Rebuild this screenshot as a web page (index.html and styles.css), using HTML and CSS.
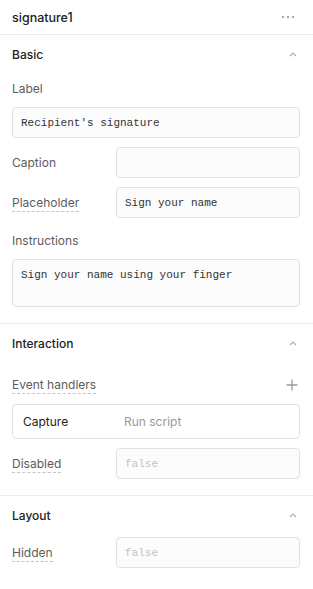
FILE: index.html
```html
<!DOCTYPE html>
<html lang="en">
<head>
    <meta charset="UTF-8">
    <meta name="viewport" content="width=device-width, initial-scale=1.0">
    <title>signature1 - Inspector</title>
    <link rel="stylesheet" href="styles.css">
</head>
<body>
    <div class="panel">
        <div class="panel-header">
            <span class="panel-title">signature1</span>
            <svg class="more" width="14" height="4" viewBox="0 0 14 4">
                <circle cx="2" cy="2" r="1.2"></circle>
                <circle cx="7" cy="2" r="1.2"></circle>
                <circle cx="12" cy="2" r="1.2"></circle>
            </svg>
        </div>

        <div class="section">
            <div class="section-head">
                <span>Basic</span>
                <svg class="chevron" width="8" height="5" viewBox="0 0 8 5"><path d="M1 4 L4 1 L7 4"></path></svg>
            </div>
            <div class="stack-label">Label</div>
            <div class="input mono">Recipient's signature</div>
            <div class="row">
                <span class="row-label">Caption</span>
                <div class="input row-input"></div>
            </div>
            <div class="row">
                <span class="row-label"><span class="dotted">Placeholder</span></span>
                <div class="input row-input mono">Sign your name</div>
            </div>
            <div class="stack-label spaced">Instructions</div>
            <div class="input textarea mono">Sign your name using your finger</div>
        </div>

        <div class="section">
            <div class="section-head">
                <span>Interaction</span>
                <svg class="chevron" width="8" height="5" viewBox="0 0 8 5"><path d="M1 4 L4 1 L7 4"></path></svg>
            </div>
            <div class="handlers-head">
                <span class="dotted">Event handlers</span>
                <svg class="plus" width="12" height="12" viewBox="0 0 12 12"><path d="M6 0.5 V11.5 M0.5 6 H11.5"></path></svg>
            </div>
            <div class="handler">
                <span class="handler-event">Capture</span>
                <span class="handler-action">Run script</span>
            </div>
            <div class="row">
                <span class="row-label"><span class="dotted">Disabled</span></span>
                <div class="input row-input mono muted">false</div>
            </div>
        </div>

        <div class="section last">
            <div class="section-head">
                <span>Layout</span>
                <svg class="chevron" width="8" height="5" viewBox="0 0 8 5"><path d="M1 4 L4 1 L7 4"></path></svg>
            </div>
            <div class="row flush">
                <span class="row-label"><span class="dotted">Hidden</span></span>
                <div class="input row-input mono muted">false</div>
            </div>
        </div>
    </div>
</body>
</html>
```

FILE: styles.css
```css
:root {
    --text: #222;
    --label: #5c5c5c;
    --muted: #9a9a9a;
    --line: #ececec;
    --field-border: #e2e2e2;
    --field-bg: #fcfcfc;
}

body {
    font-family: Inter, "Noto Sans", sans-serif;
    font-size: 12px;
    margin: 0;
    background-color: #fff;
    color: var(--text);
}

.panel {
    width: 313px;
}

.panel-header {
    height: 34px;
    display: flex;
    align-items: center;
    justify-content: space-between;
    padding: 0 18px 0 12px;
    border-bottom: 1px solid var(--line);
}

.panel-title {
    font-size: 12.5px;
    font-weight: 500;
}

.more circle {
    fill: #a8a8a8;
}

.section {
    padding: 0 13px 16px 12px;
    border-bottom: 1px solid var(--line);
}

.section.last {
    border-bottom: none;
}

.section-head {
    height: 38px;
    display: flex;
    align-items: center;
    justify-content: space-between;
    font-weight: 500;
    padding-right: 3px;
}

.chevron path {
    fill: none;
    stroke: #b0b0b0;
    stroke-width: 1.2;
}

.stack-label {
    color: var(--label);
    line-height: 20px;
    padding: 6px 0 8px;
}

.stack-label.spaced {
    padding: 13px 0 8px;
}

.input {
    box-sizing: border-box;
    height: 31px;
    border: 1px solid var(--field-border);
    border-radius: 4px;
    background-color: var(--field-bg);
    padding: 0 8px;
    display: flex;
    align-items: center;
    color: #333;
}

.mono {
    font-family: "Liberation Mono", "DejaVu Sans Mono", monospace;
    font-size: 11px;
}

.muted {
    color: #c2c2c2;
}

.textarea {
    height: 48px;
    align-items: flex-start;
    padding-top: 9px;
}

.row {
    display: flex;
    align-items: center;
    margin-top: 9px;
}

.row.flush {
    margin-top: 3px;
}

.row-label {
    width: 104px;
    flex-shrink: 0;
    color: var(--label);
}

.row-input {
    flex: 1;
}

.dotted {
    border-bottom: 1px dashed #c4c4c4;
    padding-bottom: 1px;
}

.handlers-head {
    display: flex;
    align-items: center;
    justify-content: space-between;
    height: 20px;
    margin-top: 13px;
    color: var(--label);
    padding-right: 2px;
}

.plus path {
    stroke: #9c9c9c;
    stroke-width: 1.3;
}

.handler {
    box-sizing: border-box;
    height: 35px;
    margin-top: 9px;
    border: 1px solid var(--field-border);
    border-radius: 4px;
    display: flex;
    align-items: center;
    padding: 0 10px;
}

.handler-event {
    width: 101px;
}

.handler-action {
    color: var(--muted);
}
```
